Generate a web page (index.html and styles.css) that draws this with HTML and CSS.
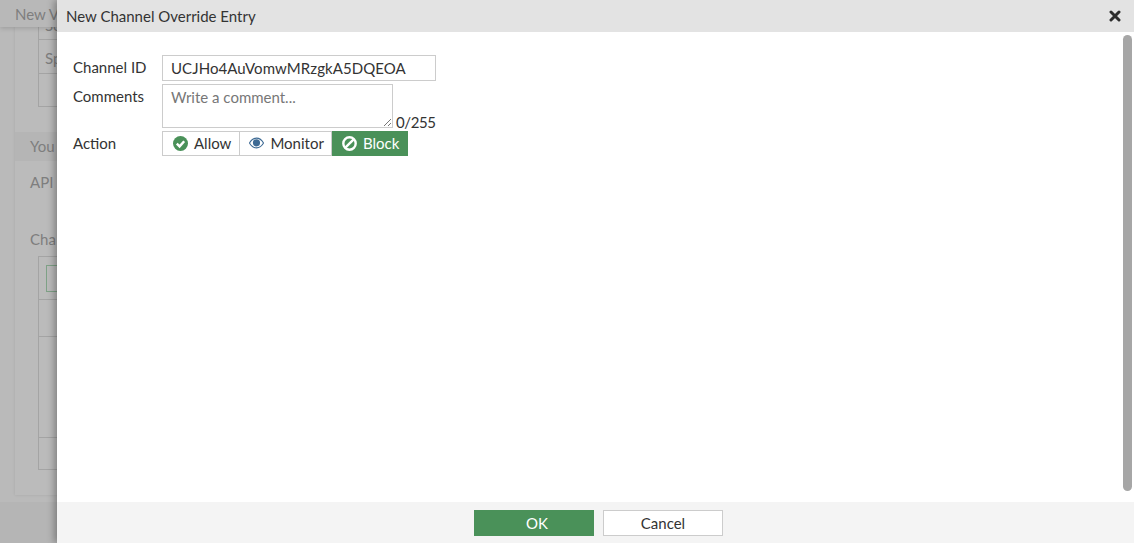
FILE: index.html
```html
<!DOCTYPE html>
<html lang="en">
<head>
    <meta charset="UTF-8">
    <title>New Channel Override Entry</title>
    <link rel="stylesheet" href="styles.css">
</head>
<body>
    <!-- dimmed page behind the slide-in -->
    <div class="page">
        <div class="page-title">New V</div>
        <div class="page-panel">
            <div class="old-table top-table">
                <div class="old-row r-first"><span>Se</span></div>
                <div class="old-row r-second"><span>Sp</span></div>
                <div class="old-row r-third"></div>
            </div>
            <div class="band">You</div>
            <div class="api-line">API</div>
            <div class="cha-line">Cha</div>
            <div class="old-table low-table">
                <div class="old-row r-a"><div class="green-box"></div></div>
                <div class="old-row r-b"></div>
                <div class="old-row r-c"></div>
                <div class="old-row r-d"></div>
            </div>
        </div>
        <div class="page-footer"></div>
    </div>

    <div class="slide">
        <div class="slide-head">
            <span>New Channel Override Entry</span>
            <svg class="close-icon" width="12" height="12" viewBox="0 0 12 12">
                <path d="M2 2 L10 10 M10 2 L2 10" stroke="#2d2d2d" stroke-width="3" stroke-linecap="round"/>
            </svg>
        </div>
        <div class="slide-body">
            <div class="form-row row-channel">
                <label>Channel ID</label>
                <div class="text-input">UCJHo4AuVomwMRzgkA5DQEOA</div>
            </div>
            <div class="form-row row-comments">
                <label>Comments</label>
                <div class="comment-wrap">
                    <div class="comment-box">
                        Write a comment...
                        <svg class="grip" width="9" height="9" viewBox="0 0 9 9">
                            <path d="M1 8 L8 1 M5 8 L8 5" stroke="#777" stroke-width="1"/>
                        </svg>
                    </div>
                    <span class="counter">0/255</span>
                </div>
            </div>
            <div class="form-row row-action">
                <label>Action</label>
                <div class="radio-group">
                    <div class="radio-item">
                        <svg width="15" height="15" viewBox="0 0 15 15">
                            <circle cx="7.5" cy="7.5" r="7.5" fill="#4a9159"/>
                            <path d="M3.8 7.6 L6.6 10.4 L11.2 5.2" fill="none" stroke="#fff" stroke-width="2.4"/>
                        </svg>
                        Allow
                    </div>
                    <div class="radio-item item-monitor">
                        <svg width="15" height="12" viewBox="0 0 16 12">
                            <path d="M0.5 6 C3 1.5 5.5 0.8 8 0.8 C10.5 0.8 13 1.5 15.5 6 C13 10.5 10.5 11.2 8 11.2 C5.5 11.2 3 10.5 0.5 6 Z" fill="none" stroke="#3d6a94" stroke-width="1.2"/>
                            <circle cx="8" cy="5.8" r="3.8" fill="#3d6a94"/>
                        </svg>
                        Monitor
                    </div>
                    <div class="radio-item selected">
                        <svg width="15" height="15" viewBox="0 0 15 15">
                            <circle cx="7.5" cy="7.5" r="6.2" fill="none" stroke="#fff" stroke-width="2.4"/>
                            <path d="M3.6 11.4 L11.4 3.6" stroke="#fff" stroke-width="2.4"/>
                        </svg>
                        Block
                    </div>
                </div>
            </div>
            <div class="scroll-thumb"></div>
        </div>
        <div class="slide-foot">
            <button class="btn btn-ok">OK</button>
            <button class="btn btn-cancel">Cancel</button>
        </div>
    </div>
</body>
</html>
```

FILE: styles.css
```css
html, body {
    margin: 0;
    height: 100%;
    overflow: hidden;
}
body {
    font-family: Lato, "Open Sans", sans-serif;
    font-size: 15px;
    color: #333;
    background: #bababa;
}
.page {
    height: 543px;
    display: flex;
    flex-direction: column;
    color: #7e7e7e;
}
.page-title {
    height: 27px;
    line-height: 29px;
    padding-left: 15px;
    font-size: 15px;
    color: #7e7e7e;
    background: #b8b8b8;
    box-shadow: 0 1px 5px rgba(0,0,0,0.18);
    position: relative;
}
.page-panel {
    height: 468px;
    margin-left: 15px;
    background: #bbb;
    box-shadow: 0 0 3px rgba(0,0,0,0.1);
    overflow: hidden;
}
.old-table {
    margin-left: 23px;
    border: 1px solid #a4a4a4;
}
.top-table {
    margin-top: -2px;
    border-top: 0;
}
.old-row {
    border-top: 1px solid #a4a4a4;
    padding-left: 6px;
    box-sizing: border-box;
}
.old-row:first-child {
    border-top: 0;
}
.r-first { height: 14px; line-height: 0; }
.r-second { height: 34px; line-height: 36px; }
.r-third { height: 33px; }
.band {
    margin-top: 25px;
    height: 29px;
    line-height: 29px;
    padding-left: 15px;
    background: #b5b5b5;
}
.api-line {
    margin-top: 11px;
    padding-left: 15px;
    line-height: 20px;
}
.cha-line {
    margin-top: 37px;
    padding-left: 15px;
    line-height: 20px;
}
.low-table {
    margin-top: 7px;
}
.r-a { height: 42px; padding: 8px 0 0 7px; }
.r-b { height: 37px; }
.r-c { height: 101px; }
.r-d { height: 32px; }
.green-box {
    width: 60px;
    height: 25px;
    border: 1px solid #7fa287;
}
.page-footer {
    margin-top: 7px;
    flex: 1;
    background: #b5b5b5;
}

/* slide-in dialog */
.slide {
    position: absolute;
    top: 0;
    left: 57px;
    right: 0;
    bottom: 0;
    display: flex;
    flex-direction: column;
    background: #fff;
    box-shadow: -3px 0 7px rgba(0,0,0,0.3);
}
.slide-head {
    height: 32px;
    flex: none;
    display: flex;
    align-items: center;
    justify-content: space-between;
    padding: 0 13px 0 9px;
    background: #e3e3e3;
    color: #333;
}
.close-icon {
    display: block;
}
.slide-body {
    flex: 1;
    position: relative;
    padding: 23px 0 0 16px;
}
.scroll-thumb {
    position: absolute;
    top: 3px;
    right: 2px;
    width: 9px;
    height: 456px;
    border-radius: 5px;
    background: #a6a6a6;
}
.form-row {
    display: flex;
}
.form-row label {
    width: 89px;
    flex: none;
    line-height: 24px;
}
.text-input {
    width: 264px;
    height: 24px;
    line-height: 24px;
    padding-left: 8px;
    letter-spacing: 0.08px;
    border: 1px solid #ccc;
    color: #333;
}
.row-channel {
    margin-bottom: 3px;
}
.row-comments {
    margin-bottom: 3px;
}
.comment-wrap {
    display: flex;
    align-items: flex-end;
}
.comment-box {
    position: relative;
    width: 221px;
    height: 42px;
    padding-left: 8px;
    line-height: 24px;
    border: 1px solid #ccc;
    color: #777;
}
.grip {
    position: absolute;
    right: 0;
    bottom: 0;
}
.counter {
    margin-left: 3px;
    line-height: 12px;
    letter-spacing: -0.4px;
    color: #333;
}
.radio-group {
    display: flex;
    height: 25px;
}
.radio-item {
    display: flex;
    align-items: center;
    gap: 6px;
    padding: 0 8px 1px 10px;
    border: 1px solid #ccc;
    border-left: 0;
    line-height: 22px;
    color: #333;
}
.radio-item:first-child {
    border-left: 1px solid #ccc;
}
.radio-item.item-monitor {
    padding-left: 9px;
    padding-right: 7px;
}
.radio-item.selected {
    background: #4a9159;
    border-color: #4a9159;
    color: #fff;
}
.slide-foot {
    height: 41px;
    flex: none;
    display: flex;
    justify-content: center;
    align-items: center;
    gap: 9px;
    padding-left: 6px;
    background: #f4f4f4;
}
.btn {
    width: 120px;
    height: 26px;
    padding: 0;
    margin-top: 1px;
    font-family: inherit;
    font-size: 15px;
    box-sizing: border-box;
}
.btn-ok {
    background: #4a9159;
    border: 0;
    padding-left: 6px;
    color: #fff;
}
.btn-cancel {
    background: #fff;
    border: 1px solid #ccc;
    color: #333;
}
```
